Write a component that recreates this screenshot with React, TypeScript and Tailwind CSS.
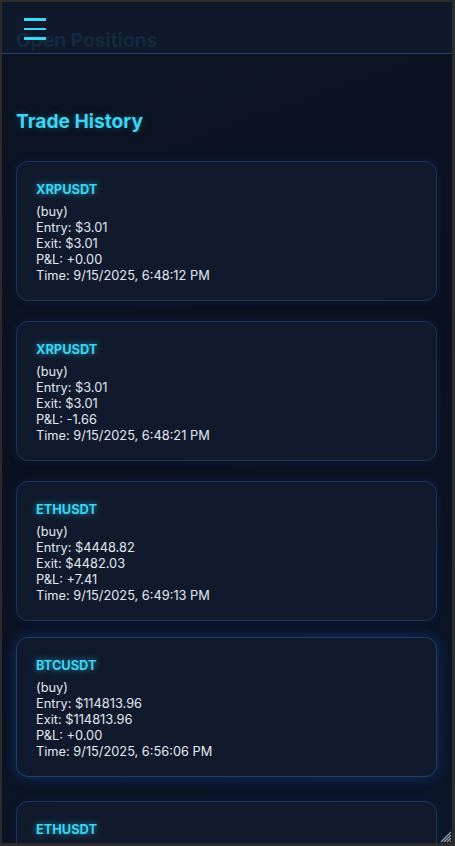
import React from "react";

const trades = [
  { sym: "XRPUSDT", side: "buy", entry: "$3.01", exit: "$3.01", pnl: "+0.00", time: "9/15/2025, 6:48:12 PM" },
  { sym: "XRPUSDT", side: "buy", entry: "$3.01", exit: "$3.01", pnl: "-1.66", time: "9/15/2025, 6:48:21 PM" },
  { sym: "ETHUSDT", side: "buy", entry: "$4448.82", exit: "$4482.03", pnl: "+7.41", time: "9/15/2025, 6:49:13 PM" },
  { sym: "BTCUSDT", side: "buy", entry: "$114813.96", exit: "$114813.96", pnl: "+0.00", time: "9/15/2025, 6:56:06 PM", hover: true },
  { sym: "ETHUSDT", side: "buy", entry: "$4448.82", exit: "$4482.03", pnl: "+7.41", time: "9/15/2025, 6:58:40 PM" },
];

function TradeCard({ t }: { t: (typeof trades)[number] }) {
  return (
    <div
      className={
        t.hover
          ? "rounded-xl border border-[#1f3f66] bg-[#111a2d] px-[19px] pt-5 pb-4 -translate-y-1 shadow-[0_0_14px_rgba(37,99,235,0.35)]"
          : "rounded-xl border border-[#1c3558] bg-[#111a2d] px-[19px] pt-5 pb-4 shadow-[0_0_10px_rgba(30,64,175,0.18)]"
      }
    >
      <div className="text-[12.8px] leading-4 font-bold text-[#3fd3f2] mb-[6px] [text-shadow:0_0_6px_rgba(34,211,238,0.7)]">
        {t.sym}
      </div>
      <div className="text-[12.8px] leading-4 text-[#e3e8ef]">
        <div>({t.side})</div>
        <div>Entry: {t.entry}</div>
        <div>Exit: {t.exit}</div>
        <div>P&amp;L: {t.pnl}</div>
        <div>Time: {t.time}</div>
      </div>
    </div>
  );
}

export default function App() {
  return (
    <div className="w-[455px] h-[846px] border-l-2 border-t-2 border-r-[3px] border-b-[3px] border-[#2c2c2c] bg-[#2c2c2c] font-['Inter',sans-serif]">
      <div className="relative w-full h-full overflow-hidden bg-[linear-gradient(160deg,#0c1322_0%,#0b1120_50%,#0b1628_100%)]">
        {/* scrolled content */}
        <div className="pt-6 pl-[14px] pr-[15px]">
          <h2 className="text-[19.2px] leading-7 font-bold text-[#2ab8d8]">Open Positions</h2>
          <h2 className="mt-[53px] text-[19.2px] leading-7 font-bold text-[#3dd5f3] [text-shadow:0_0_6px_rgba(34,211,238,0.35)]">
            Trade History
          </h2>
          <div className="mt-[26px] flex flex-col gap-5">
            {trades.map((t, i) => (
              <TradeCard key={i} t={t} />
            ))}
          </div>
        </div>

        {/* fixed translucent header */}
        <div className="absolute top-0 left-0 right-0 h-[52px] bg-[#111a2e]/[0.9] border-b border-[#22406a]">
          <div className="absolute left-[22px] top-[16px] w-[22px] flex flex-col gap-[7px]">
            <span className="block h-[2.5px] bg-[#3ad8f6]" />
            <span className="block h-[2.5px] bg-[#3ad8f6]" />
            <span className="block h-[2.5px] bg-[#3ad8f6]" />
          </div>
        </div>

        {/* resize grip */}
        <svg className="absolute right-0 bottom-0" width="14" height="14" viewBox="0 0 14 14">
          <path d="M13 3 L3 13 M13 6 L6 13 M13 9 L9 13 M13 12 L12 13" stroke="#9ca3af" strokeWidth="1.2" />
        </svg>
      </div>
    </div>
  );
}
